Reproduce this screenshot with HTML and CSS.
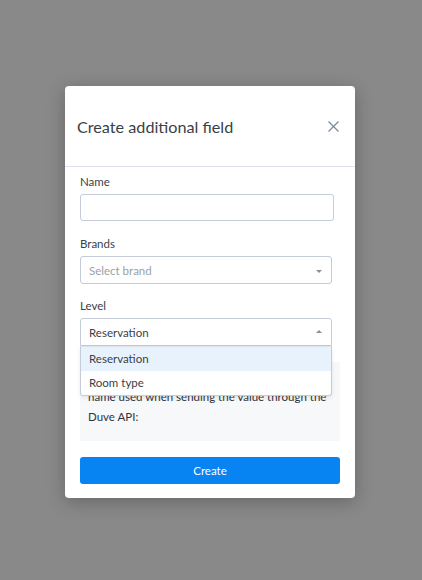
FILE: index.html
```html
<!DOCTYPE html>
<html>
<head>
<meta charset="utf-8">
<link rel="stylesheet" href="styles.css">
</head>
<body>
<div class="overlay">
  <div class="modal">
    <div class="modal-header">
      <h2 class="modal-title">Create additional field</h2>
      <span class="close" aria-label="close">
        <svg width="11" height="11" viewBox="0 0 11 11"><path d="M0.5 0.5L10.5 10.5M10.5 0.5L0.5 10.5" stroke="#7d8ba1" stroke-width="1.3" fill="none"/></svg>
      </span>
    </div>
    <div class="modal-body">
      <div class="field">
        <label class="label">Name</label>
        <div class="input input-name"></div>
      </div>
      <div class="field field-brands">
        <label class="label">Brands</label>
        <div class="input select">
          <span class="placeholder">Select brand</span>
          <span class="caret caret-down"></span>
        </div>
      </div>
      <div class="field field-level">
        <label class="label">Level</label>
        <div class="select-wrap">
          <div class="input select open">
            <span class="value">Reservation</span>
            <span class="caret caret-up"></span>
          </div>
          <div class="menu">
            <div class="option active">Reservation</div>
            <div class="option">Room type</div>
          </div>
        </div>
      </div>
      <div class="info">The field key is the technical<br>name used when sending the value through the<br>Duve API:</div>
      <button class="btn">Create</button>
    </div>
  </div>
</div>
</body>
</html>
```
FILE: styles.css
```css
* { box-sizing: border-box; }
html, body { margin: 0; padding: 0; }
body {
  background: #898989;
  font-family: Lato, "Open Sans", sans-serif;
  color: #333a45;
  width: 422px;
  height: 580px;
  overflow: hidden;
}
.overlay {
  padding: 86px 0 0 65px;
}
.modal {
  width: 290px;
  height: 412px;
  background: #fff;
  border-radius: 4px;
  box-shadow: 0 4px 18px rgba(0,0,0,0.25);
}
.modal-header {
  height: 81px;
  border-bottom: 1px solid #dfe2ea;
  display: flex;
  align-items: center;
  justify-content: space-between;
  padding: 0 15px 0 12px;
}
.modal-title {
  margin: 0;
  font-weight: 400;
  font-size: 16.2px;
  color: #3a3f48;
}
.close { display: flex; margin-top: 1px; margin-right: 1px; }
.modal-body {
  padding: 7px 15px 0 15px;
}
.field { margin-bottom: 15px; }
.field-brands { margin-bottom: 14px; }
.label {
  display: block;
  font-size: 11.5px;
  color: #3a3f48;
  margin-bottom: 5px;
  line-height: 15px;
}
.input {
  height: 28px;
  border: 1px solid #c3ccd8;
  border-radius: 3px;
  background: #fff;
}
.input-name { width: 254px; height: 27px; margin-bottom: 0; }
.select {
  width: 252px;
  display: flex;
  align-items: center;
  justify-content: space-between;
  padding: 0 9px 0 8px;
  font-size: 11.5px;
}
.placeholder { color: #9aa0a8; }
.value { color: #3a3f48; }
.caret {
  width: 0; height: 0;
  border-left: 3px solid transparent;
  border-right: 3px solid transparent;
}
.caret-down { border-top: 3px solid #8a8f96; margin-top: 2px; }
.caret-up { border-bottom: 3px solid #8a8f96; margin-top: -1px; }
.field-level { margin-bottom: 16px; }
.select-wrap { position: relative; }
.select.open { border-radius: 3px 3px 0 0; }
.menu {
  position: absolute;
  left: 0;
  top: 28px;
  width: 252px;
  background: #fff;
  border: 1px solid #c3ccd8;
  border-top: 1px solid #dde3ea;
  border-radius: 0 0 3px 3px;
  box-shadow: 0 2px 4px rgba(0,0,0,0.08);
  z-index: 2;
}
.option {
  height: 24px;
  line-height: 24px;
  padding-left: 8px;
  font-size: 11.5px;
  color: #3a3f48;
}
.option.active { background: #e8f2fd; }
.info {
  background: #f7f8fa;
  height: 79px;
  padding: 5px 8px 0 8px;
  font-size: 11.5px;
  line-height: 20px;
  color: #2f343b;
}
.btn {
  display: block;
  width: 260px;
  height: 27px;
  margin-top: 16px;
  border: 0;
  border-radius: 3px;
  background: #0883f2;
  color: #fff;
  font-family: Lato, "Open Sans", sans-serif;
  font-size: 11.5px;
  padding: 0;
}
```
